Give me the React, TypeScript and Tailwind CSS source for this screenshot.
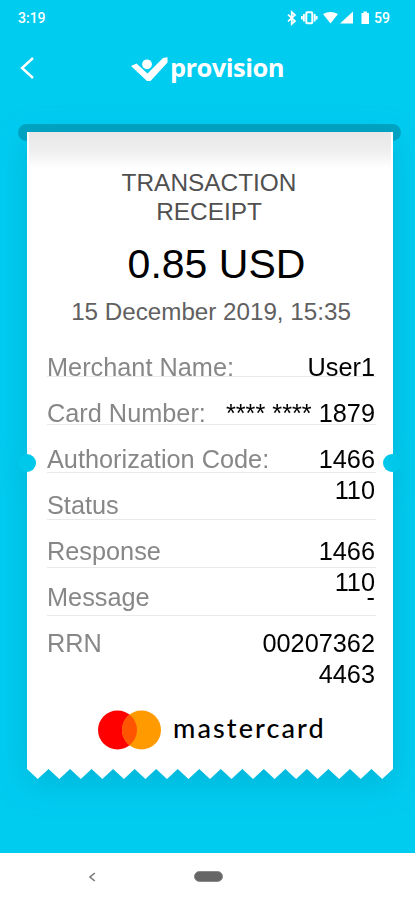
const rows = [
  { label: "Merchant Name:", value: ["User1"] },
  { label: "Card Number:", value: ["**** **** 1879"] },
  { label: "Authorization Code:", value: ["1466", "110"] },
  { label: "Status", value: [] },
  { label: "Response", value: ["1466", "110"] },
  { label: "Message", value: ["-"] },
  { label: "RRN", value: ["00207362", "4463"] },
];

function StatusBar() {
  return (
    <div className="flex h-9 items-center justify-between pl-[18px] pr-[25px] text-white">
      <span className="text-[14px] font-medium font-['Roboto',sans-serif]">3:19</span>
      <div className="flex items-center">
        <svg width="86" height="16" viewBox="0 0 86 16" fill="currentColor">
          <path d="M1 4.7l7 6.3-3.3 3v-12l3.3 3-7 6.3" fill="none" stroke="currentColor" strokeWidth="1.7" />
          <rect x="19.3" y="2.3" width="6" height="10.9" rx="1" fill="none" stroke="currentColor" strokeWidth="2" />
          <path d="M16.9 4v7.5M14.9 6v3.6M27.7 4v7.5M29.7 6v3.6" stroke="currentColor" strokeWidth="1.8" />
          <path d="M36 4Q43.5 0 51 4L43.5 13.5z" />
          <path d="M66 1.5v12H53z" />
          <path d="M74.5 3h2V1.5H80V3h2v11h-7.5z" />
        </svg>
        <span className="ml-px text-[14px] font-medium font-['Roboto',sans-serif]">59</span>
      </div>
    </div>
  );
}

function Header() {
  return (
    <header className="flex h-16 items-center text-white">
      <svg className="ml-[19px]" width="16" height="24" viewBox="0 0 16 24" fill="none">
        <path d="M14 2L3 12l11 10" stroke="currentColor" strokeWidth="2.4" />
      </svg>
      <svg className="ml-[95px]" width="39" height="28" viewBox="0 0 39 28" fill="currentColor">
        <path d="M1 12l5.5-2.5L17.5 19.5 33 4l4.5-.8v5.3L20.5 27H17z" />
        <circle cx="17" cy="10.3" r="4.9" />
      </svg>
      <span className="ml-[1px] -mt-[2px] text-[25.5px] font-bold leading-8 tracking-[-0.55px] font-['Open_Sans',sans-serif]">
        provision
      </span>
    </header>
  );
}

function MastercardLogo() {
  return (
    <div className="mt-[36px] flex h-10 items-center pl-[71px]">
      <svg width="64" height="40" viewBox="0 0 64 40">
        <circle cx="19.5" cy="20" r="19.5" fill="#ff0000" />
        <circle cx="43.5" cy="20" r="19.5" fill="#ff9a00" />
        <path d="M31.5 4.6a19.5 19.5 0 0 1 0 30.8a19.5 19.5 0 0 1 0-30.8z" fill="#ff5500" />
      </svg>
      <span className="ml-[11px] -mt-1 text-[27px] font-medium tracking-[2.1px] text-black font-['Lato',sans-serif]">
        mastercard
      </span>
    </div>
  );
}

function TornEdge() {
  const teeth = Array.from({ length: 17 }, (_, i) => `L${i * 21.5 + 10.75} 10L${(i + 1) * 21.5} 0`).join("");
  return (
    <svg className="-mt-px block" width="366" height="11" viewBox="0 -1 365.5 11" preserveAspectRatio="none">
      <path d={`M0 -1V0${teeth}V-1z`} fill="#fff" />
    </svg>
  );
}

function Receipt() {
  return (
    <div className="relative ml-[27px] w-[366px] -mt-[9px] drop-shadow-[0_8px_16px_rgba(0,120,150,0.28)]">
      <div className="h-[637px] bg-white">
        <div className="mx-[2px] h-[36px] bg-linear-to-b from-[#e7e7e7] via-[#eeeeee] to-white" />
        <div className="pr-[2px] text-center">
          <h1 className="text-[24.4px] leading-[29px] text-[#505050]">
            TRANSACTION
            <br />
            RECEIPT
          </h1>
          <p className="mt-[13px] pl-[15px] text-[41px] leading-[50px] text-black">0.85 USD</p>
          <p className="mt-[8px] pl-1 text-[24.2px] leading-[30px] text-[#606060]">15 December 2019, 15:35</p>
        </div>
        <div className="relative mt-[25px] pl-[20px] pr-[18px]">
          <div className="absolute left-[20px] right-[17px] top-[24px]">
            {[0, 1, 2, 3, 4, 5].map((i) => (
              <div key={i} className="h-[47.8px] border-t border-[#e9e9e9]" />
            ))}
          </div>
          {rows.map((row) => (
            <div key={row.label} className="relative flex h-[46px] justify-between text-[25.3px] leading-[31px]">
              <span className="text-[#878787]">{row.label}</span>
              <div className="text-right text-[25.3px] text-black">
                {row.value.map((line) => (
                  <p key={line}>{line}</p>
                ))}
              </div>
            </div>
          ))}
        </div>
        <MastercardLogo />
      </div>
      <TornEdge />
      <div className="absolute -left-[9px] top-[322px] size-[18px] rounded-full bg-[#00c8ea]" />
      <div className="absolute -right-[8px] top-[322px] size-[18px] rounded-full bg-[#00c8ea]" />
    </div>
  );
}

function NavBar() {
  return (
    <div className="flex h-[47px] items-center bg-white">
      <svg className="ml-[88px]" width="8" height="10" viewBox="0 0 8 10" fill="none">
        <path d="M6.8 1L2 5l4.8 4" stroke="#777" strokeWidth="1.6" />
      </svg>
      <div className="ml-[98px] h-[11px] w-[29px] rounded-full border border-[#888] bg-[#666]" />
    </div>
  );
}

export default function App() {
  return (
    <div className="flex h-[900px] w-[415px] flex-col overflow-hidden bg-[#00ccf0] font-['Liberation_Sans',Arial,sans-serif]">
      <StatusBar />
      <Header />
      <main className="flex-1 pt-[23.5px]">
        <div className="ml-[18px] h-[17.5px] w-[383px] rounded-full bg-[#00a4c3]" />
        <Receipt />
      </main>
      <NavBar />
    </div>
  );
}
